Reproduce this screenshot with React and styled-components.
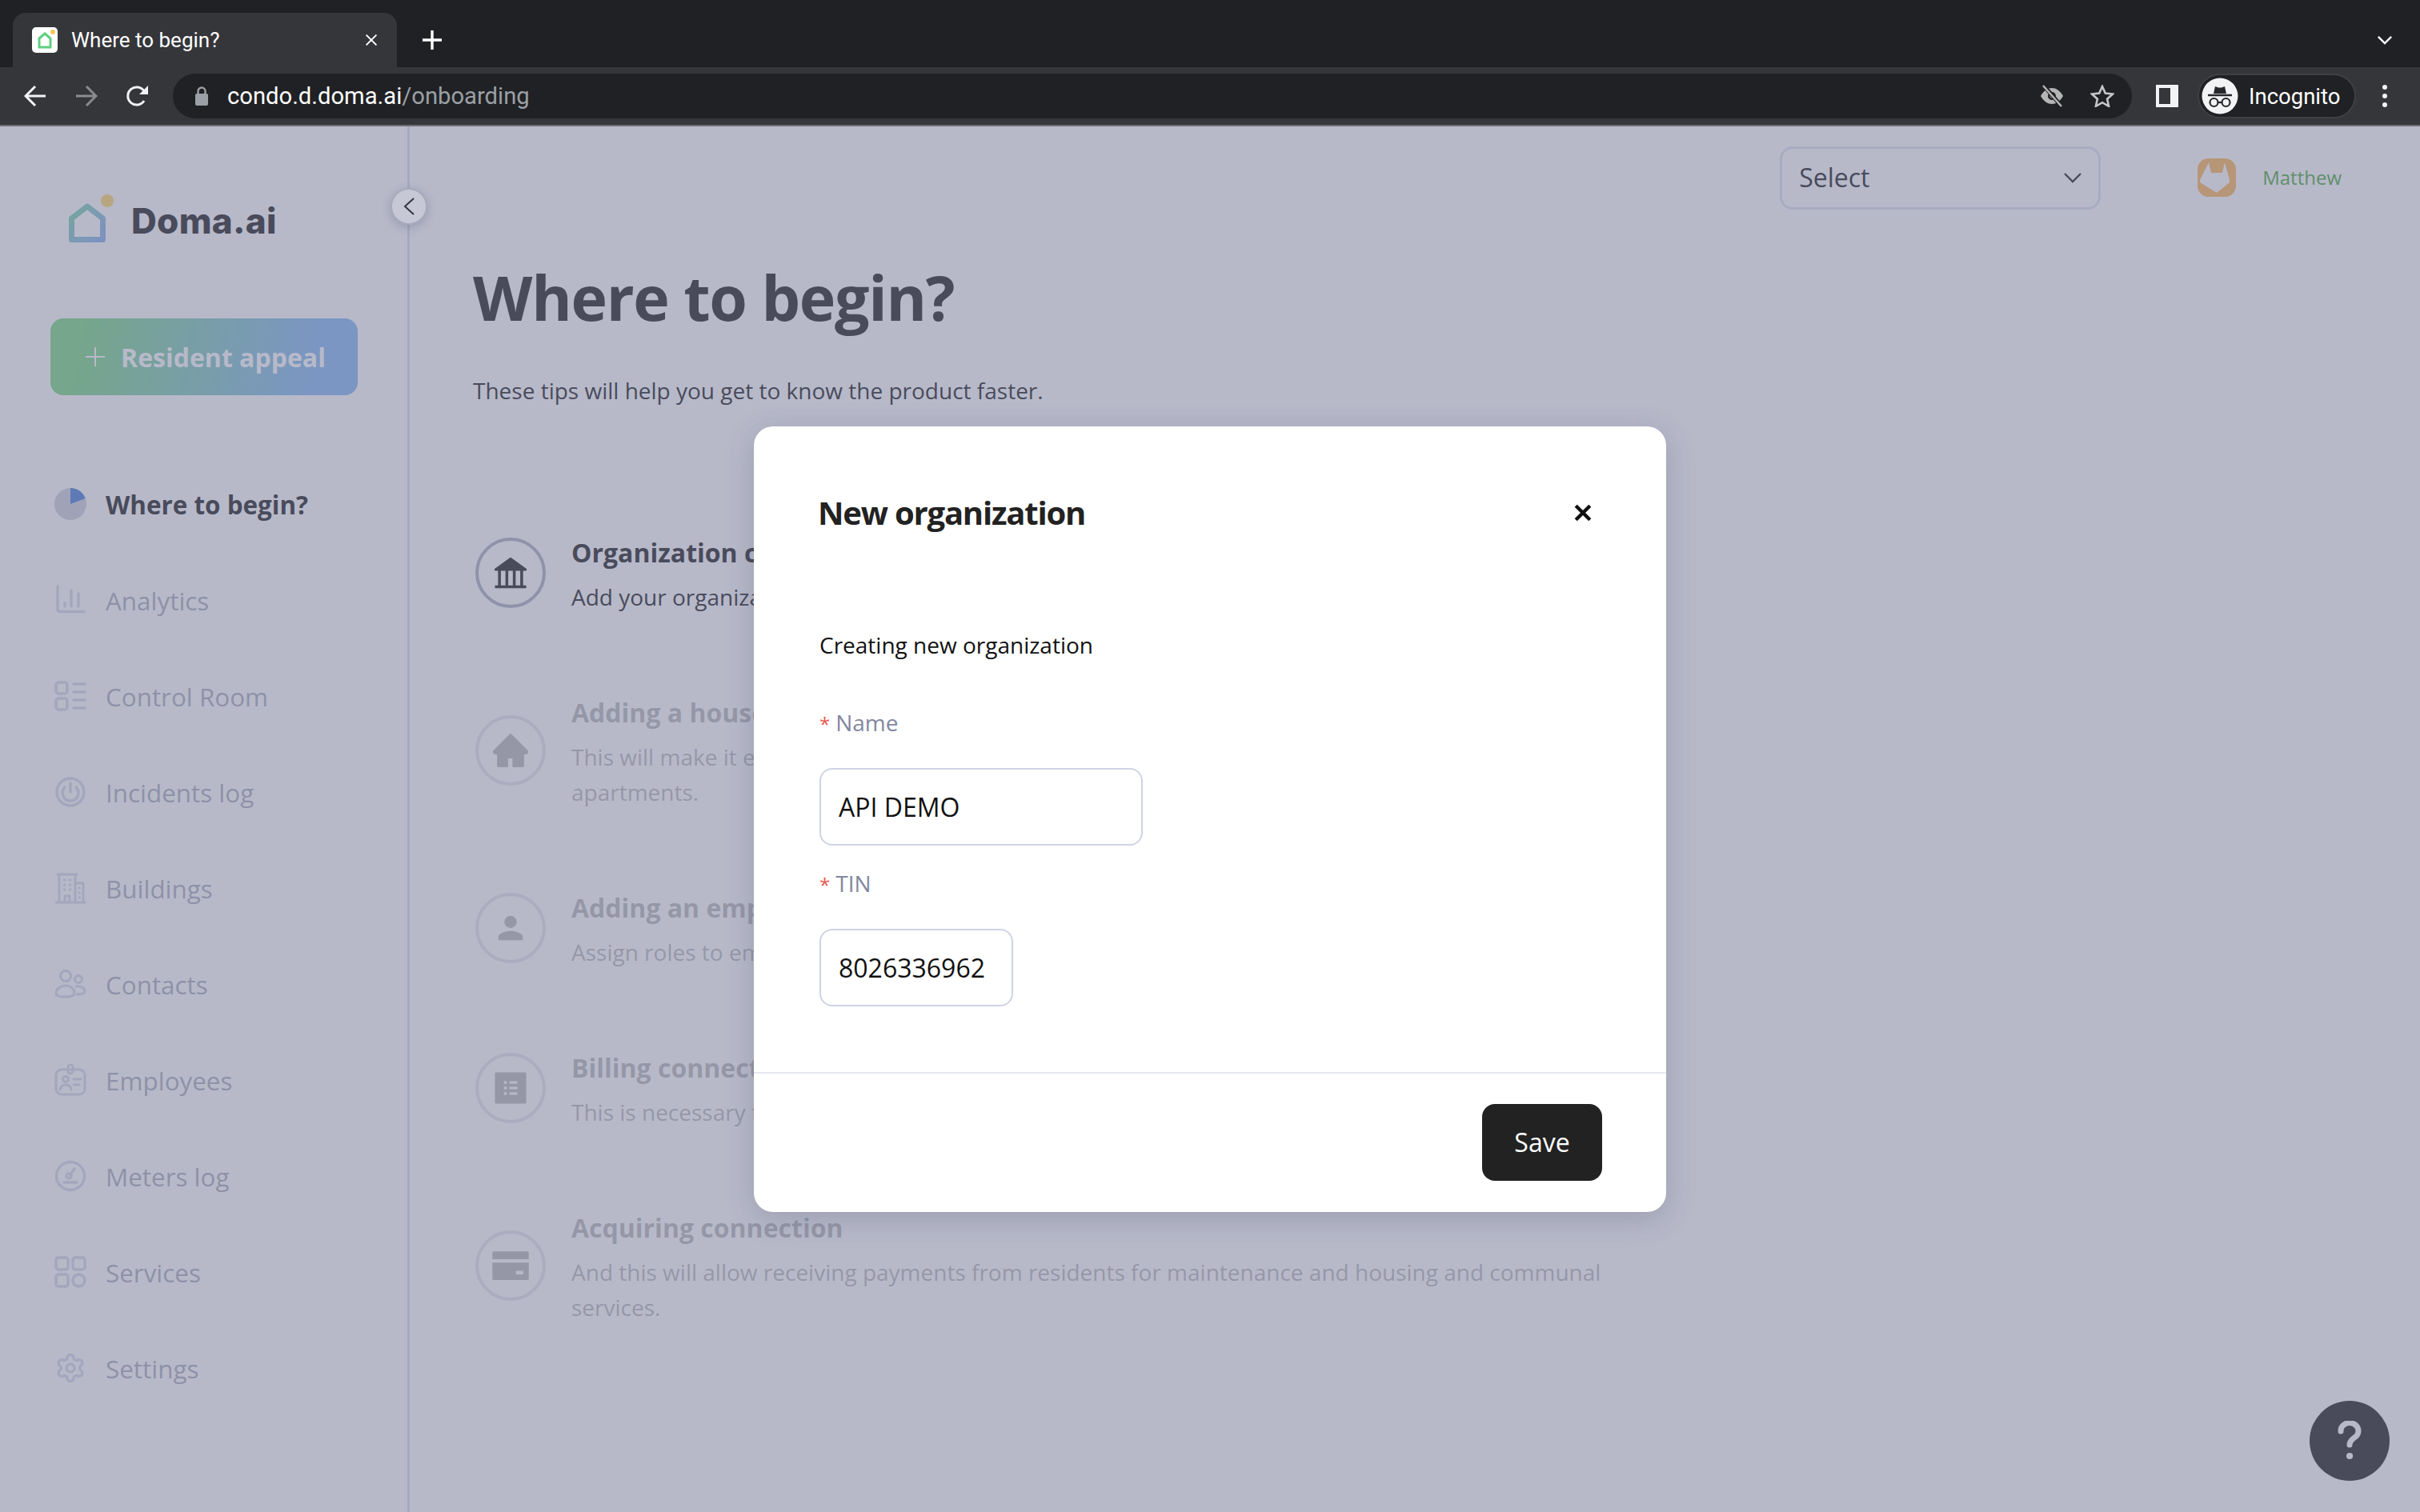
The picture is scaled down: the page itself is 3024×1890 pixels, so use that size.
import React from 'react'
import styled, { createGlobalStyle } from 'styled-components'
import { Settings } from 'lucide-react'
import { AiFillBank, AiFillHome, AiFillProfile, AiFillCreditCard } from 'react-icons/ai'
import { MdPerson } from 'react-icons/md'

const Global = createGlobalStyle`
    html, body {
        margin: 0;
        padding: 0;
        width: 3024px;
        height: 1890px;
        overflow: hidden;
        background: #fff;
        font-family: "Open Sans", sans-serif;
    }
    * { box-sizing: border-box; }
`

const Screen = styled.div`
    width: 3024px;
    height: 1890px;
    display: flex;
    flex-direction: column;
`

/* browser chrome */
const TabStrip = styled.div`
    height: 84px;
    background: #202124;
    display: flex;
    align-items: flex-end;
    padding: 0 35px 0 16px;
    flex-shrink: 0;
`
const Tab = styled.div`
    width: 480px;
    height: 68px;
    background: #35363a;
    border-radius: 16px 16px 0 0;
    display: flex;
    align-items: center;
    padding: 0 24px 0 24px;
    color: #fff;
    font: 400 26px "Roboto", sans-serif;
`
const TabTitle = styled.span`
    margin-left: 17px;
    flex: 1;
`
const NewTab = styled.div`
    width: 88px;
    height: 68px;
    display: flex;
    align-items: center;
    justify-content: center;
    color: #fff;
`
const TabMenu = styled.div`
    margin-left: auto;
    height: 68px;
    display: flex;
    align-items: center;
    color: #fff;
`
const Toolbar = styled.div`
    height: 74px;
    background: #35363a;
    border-bottom: 2px solid #6e6f73;
    display: flex;
    align-items: center;
    padding: 0 0 0 30px;
    flex-shrink: 0;
`
const NavBtn = styled.div`
    width: ${p => p.$w || 64}px;
    margin-left: ${p => p.$ml || 0}px;
    flex-shrink: 0;
    display: flex;
    align-items: center;
    color: ${p => p.$off ? '#8a8b8e' : '#f1f3f4'};
`
const Omnibox = styled.div`
    width: 2448px;
    height: 56px;
    margin-left: -6px;
    flex-shrink: 0;
    border-radius: 28px;
    background: #202124;
    display: flex;
    align-items: center;
    padding: 0 22px 0 27px;
`
const Url = styled.div`
    margin-left: 23px;
    flex: 1;
    color: #fff;
    font: 400 29.2px "Roboto", sans-serif;
    span { color: #9aa0a6; }
`
const OmniIcons = styled.div`
    display: flex;
    align-items: center;
    gap: 33px;
`
const Profile = styled.div`
    width: 198px;
    height: 56px;
    margin-left: 24px;
    flex-shrink: 0;
    border-radius: 28px;
    background: #202124;
    border: 2px solid #3f4044;
    display: flex;
    align-items: center;
    padding-left: 3px;
    gap: 13px;
    color: #fff;
    font: 400 27.5px "Roboto", sans-serif;
`

/* page */
const Page = styled.div`
    position: relative;
    flex: 1;
    display: flex;
    min-height: 0;
`
const Sidebar = styled.aside`
    position: relative;
    width: 512px;
    flex-shrink: 0;
    border-right: 3px solid #dcdee8;
    padding: 85px 0 0 63px;
`
const LogoRow = styled.div`
    display: flex;
    align-items: flex-end;
    height: 60px;
    padding-left: 23px;
`
const LogoText = styled.span`
    margin-left: 22px;
    font: 800 44px/54px "Inter", sans-serif;
    letter-spacing: .3px;
    color: #222;
`
const CreateBtn = styled.div`
    width: 384px;
    height: 96px;
    margin-top: 95px;
    border-radius: 16px;
    background: linear-gradient(100deg, #7cd882 10%, #86b8f2 85%);
    display: flex;
    align-items: center;
    padding-left: 44px;
    gap: 20px;
    color: #fff;
    font: 700 32px "Open Sans", sans-serif;
`
const Nav = styled.nav`
    margin-top: 76px;
`
const NavItem = styled.div`
    height: 120px;
    display: flex;
    align-items: center;
    gap: 24px;
    padding-left: 5px;
    font-size: 31.4px;
    font-weight: ${p => p.$active ? 700 : 400};
    color: ${p => p.$active ? '#222' : '#adafba'};
    svg { color: #d6d8e4; flex-shrink: 0; }
`
const Toggle = styled.div`
    position: absolute;
    z-index: 2;
    top: 77px;
    right: -25px;
    width: 46px;
    height: 46px;
    border-radius: 50%;
    background: #c6c8d6;
    border: 2px solid #a9abbd;
    box-shadow: 0 3px 12px rgba(60, 64, 90, .25);
    display: flex;
    align-items: center;
    justify-content: center;
    color: #33353f;
`
const Main = styled.main`
    flex: 1;
    padding-top: 25px;
`
const Header = styled.header`
    display: flex;
    justify-content: flex-end;
    align-items: center;
    padding-right: 98px;
    height: 79px;
`
const SelectBox = styled.div`
    width: 401px;
    height: 79px;
    border: 3px solid #e1e3ee;
    border-radius: 16px;
    display: flex;
    align-items: center;
    justify-content: space-between;
    padding: 0 21px 2px 21px;
    font-size: 32px;
    color: #222;
`
const SelectArrow = styled.span`
    display: flex;
    color: #222;
`
const UserBox = styled.div`
    margin-left: 121px;
    display: flex;
    align-items: center;
    gap: 33px;
    font-size: 24px;
    color: #50a83e;
    padding-bottom: 1px;
`
const UserName = styled.span`
    margin-bottom: 2px;
`
const Content = styled.div`
    padding-left: 79px;
`
const Heading = styled.h1`
    margin: 60px 0 44px;
    font-size: 77px;
    line-height: 100px;
    font-weight: 700;
    letter-spacing: -1.3px;
    color: #222;
`
const Lead = styled.p`
    margin: 0 0 154px;
    font-size: 28px;
    line-height: 44px;
    color: #222;
`
const Steps = styled.div`
    display: flex;
    flex-direction: column;
    gap: 96px;
`
const Step = styled.div`
    display: flex;
    align-items: center;
    gap: 32px;
    padding-left: 3px;
    opacity: ${p => p.$dim ? .3 : 1};
`
const StepCircle = styled.div`
    width: 88px;
    height: 88px;
    flex-shrink: 0;
    border-radius: 50%;
    border: 4px solid #aeb1c0;
    display: flex;
    align-items: center;
    justify-content: center;
    color: #222;
`
const StepText = styled.div`
    width: 1340px;
`
const StepTitle = styled.div`
    font-size: 32px;
    line-height: 54px;
    font-weight: 700;
    color: #222;
    margin-bottom: 6px;
`
const StepDesc = styled.div`
    font-size: 28px;
    line-height: 44px;
    color: #222;
`
const HelpBtn = styled.div`
    position: absolute;
    right: 38px;
    bottom: 39px;
    width: 100px;
    height: 100px;
    border-radius: 50%;
    background: #222;
    display: flex;
    align-items: center;
    justify-content: center;
    color: #fff;
`

/* modal */
const Overlay = styled.div`
    position: absolute;
    inset: 0;
    z-index: 1;
    background: rgba(111, 115, 147, .5);
    display: flex;
    justify-content: center;
    align-items: flex-start;
    padding-top: 375px;
`
const Modal = styled.div`
    width: 1140px;
    height: 982px;
    background: #fff;
    border-radius: 24px;
    box-shadow: 0 8px 36px rgba(60, 64, 90, .22);
    display: flex;
    flex-direction: column;
`
const ModalBody = styled.div`
    flex: 1;
    padding: 80px 80px 0 82px;
`
const ModalHead = styled.div`
    display: flex;
    justify-content: space-between;
    align-items: center;
    height: 56px;
    margin-left: -2px;
`
const ModalTitle = styled.h2`
    margin: 0;
    font-size: 40px;
    line-height: 56px;
    font-weight: 700;
    letter-spacing: -1.2px;
    color: #222;
`
const CloseBtn = styled.div`
    display: flex;
    margin-right: 13px;
    color: #111;
`
const ModalNote = styled.div`
    margin-top: 117px;
    font-size: 28px;
    line-height: 40px;
    color: #111;
`
const Field = styled.div`
    margin-top: ${p => p.$first ? 57 : 27}px;
`
const Label = styled.div`
    font-size: 28px;
    line-height: 40px;
    color: #82879f;
    i {
        font-style: normal;
        color: #e8574d;
        font-size: 24px;
        margin-right: 7px;
    }
`
const InputBox = styled.div`
    width: ${p => p.$w}px;
    height: 97px;
    margin-top: 35px;
    border: 2px solid #d0d3e5;
    border-radius: 16px;
    display: flex;
    align-items: center;
    padding-left: 22px;
    font-size: 32px;
    color: #111;
`
const ModalFoot = styled.div`
    height: 175px;
    border-top: 2px solid #e6e8f1;
    display: flex;
    justify-content: flex-end;
    padding: 38px 80px 0 0;
`
const SaveBtn = styled.div`
    width: 150px;
    height: 96px;
    border-radius: 16px;
    background: #222;
    color: #fff;
    display: flex;
    align-items: center;
    justify-content: center;
    padding-bottom: 2px;
    font-size: 32px;
    font-weight: 500;
`

const Stroke = ({ size = 40, w = 3.4, children }) => (
    <svg width={size} height={size} viewBox="0 0 40 40" fill="none" stroke="currentColor" strokeWidth={w} strokeLinecap="round" strokeLinejoin="round">
        {children}
    </svg>
)

const PieIcon = () => (
    <svg width="40" height="40" viewBox="0 0 40 40">
        <circle cx="20" cy="20" r="20" fill="#d0d2dc" />
        <path d="M20 20V0a20 20 0 0 1 18.6 13z" fill="#4a7ed8" />
    </svg>
)
const AnalyticsIcon = () => <Stroke><path d="M4 3v29a2.5 2.5 0 0 0 2.5 2.5H37M13 24v4M21 8v20M30 12v16" /></Stroke>
const RoomIcon = () => <Stroke><rect x="2" y="3" width="14" height="14" rx="3" /><rect x="2" y="23" width="14" height="14" rx="3" /><path d="M24 5h14M24 15h14M24 25h14M24 35h14" /></Stroke>
const IncidentIcon = () => <Stroke><circle cx="20" cy="20" r="17" /><path d="M13 14a10 10 0 1 0 14 0M20 9v11" /></Stroke>
const BuildingIcon = () => <Stroke w={2.8}><path d="M2 38h36M6 38V3h20v35M4 3h24M26 14h10v24M13 38v-8h6v8" /><path d="M12 10h1M19 10h1M12 16h1M19 16h1M12 22h1M19 22h1M31 20h.5M31 26h.5M31 32h.5" /></Stroke>
const ContactsIcon = () => <Stroke w={3}><circle cx="14" cy="10" r="6.5" /><circle cx="30" cy="14" r="4.5" /><path d="M2 32c0-6 5-10 12-10 6 0 11 4 11 9 0 3-3 5-11 5S2 35 2 32zM27 23c6-1 11 2 11 6 0 3-4 4-10 4" /></Stroke>
const BadgeIcon = () => <Stroke w={3}><rect x="2" y="7" width="36" height="31" rx="7" /><rect x="17" y="1" width="6" height="11" rx="3" /><circle cx="14" cy="19" r="3.5" /><path d="M7 32c1-4 4-6 7-6s6 2 7 6M24 19h9M24 26h7" /></Stroke>
const MeterIcon = () => <Stroke><circle cx="20" cy="20" r="17.5" /><circle cx="18" cy="20" r="3" /><path d="M20 18l5-7M12 28h16" /></Stroke>
const ServicesIcon = () => <Stroke><rect x="2" y="2" width="15" height="15" rx="3" /><rect x="23" y="2" width="15" height="15" rx="3" /><rect x="2" y="23" width="15" height="15" rx="3" /><circle cx="30.5" cy="30.5" r="7.5" /></Stroke>
const SettingsIcon = () => <Settings size={40} strokeWidth={2} />

const LogoMark = () => (
    <svg width="56" height="60" viewBox="0 0 56 60" fill="none">
        <defs>
            <linearGradient id="logoGrad" x1="0" y1="0" x2="1" y2="1">
                <stop offset="0" stopColor="#7dd6a8" />
                <stop offset="1" stopColor="#8cb0f0" />
            </linearGradient>
        </defs>
        <path d="M3.5 30L23 15l19.5 15v26.5H3.5z" stroke="url(#logoGrad)" strokeWidth="7" strokeLinejoin="round" />
        <circle cx="48" cy="8" r="8" fill="#ffd86a" />
    </svg>
)

const Favicon = () => (
    <svg width="32" height="32" viewBox="0 0 32 32">
        <rect width="32" height="32" rx="5" fill="#fff" />
        <path d="M9 14l7-6 7 6v11H9z" fill="none" stroke="#5fcf80" strokeWidth="3" />
        <circle cx="26" cy="6" r="3" fill="#f7c65b" />
    </svg>
)
const CrossIcon = ({ size, w }) => (
    <svg width={size} height={size} viewBox="0 0 20 20" fill="none" stroke="currentColor" strokeWidth={w}>
        <path d="M2 2l16 16M18 2L2 18" />
    </svg>
)
const PlusIcon = ({ size, w }) => (
    <svg width={size} height={size} viewBox="0 0 24 24" fill="none" stroke="currentColor" strokeWidth={w}>
        <path d="M12 0v24M0 12h24" />
    </svg>
)
const Chevron = ({ dir = 'down', w = 3, width = 22, height = 14 }) => (
    <svg width={width} height={height} viewBox={dir === 'down' ? '0 0 22 14' : '0 0 14 22'} fill="none" stroke="currentColor" strokeWidth={w}>
        <path d={dir === 'down' ? 'M1 2l10 10L21 2' : 'M13 1L2 11l11 10'} />
    </svg>
)
const BackArrow = ({ flip }) => (
    <svg width="28" height="28" viewBox="0 0 28 28" fill="none" stroke="currentColor" strokeWidth="3" style={flip ? { transform: 'scaleX(-1)' } : undefined}>
        <path d="M27 14H3M14 2L2 14l12 12" />
    </svg>
)
const ReloadIcon = () => (
    <svg width="28" height="28" viewBox="0 0 28 28">
        <path d="M22 20a11 11 0 1 1 0-12" fill="none" stroke="currentColor" strokeWidth="3" />
        <path d="M27 1v11H16z" fill="currentColor" />
    </svg>
)
const LockIcon = () => (
    <svg width="18" height="24" viewBox="0 0 18 24">
        <path d="M4.5 10V6a4.5 4.5 0 0 1 9 0v4" fill="none" stroke="#9aa0a6" strokeWidth="2.4" />
        <rect x="1" y="9" width="16" height="15" rx="2" fill="#9aa0a6" />
    </svg>
)
const EyeOffIcon = () => (
    <svg width="30" height="28" viewBox="0 0 30 28">
        <path d="M1 14C5 7 10 4 15 4s10 3 14 10c-4 7-9 10-14 10S5 21 1 14z" fill="#b5b5b5" />
        <circle cx="15" cy="14" r="5" fill="#202124" />
        <circle cx="15" cy="14" r="2.5" fill="#b5b5b5" />
        <path d="M4 0l24 28" stroke="#202124" strokeWidth="5" />
        <path d="M4 1l23 26" stroke="#b5b5b5" strokeWidth="2.5" />
    </svg>
)
const StarIcon = () => (
    <svg width="30" height="28" viewBox="0 0 30 28" fill="none" stroke="#c4c7c9" strokeWidth="2.6">
        <path d="M15 2l3.8 8.5 9.2 1-6.900 6.200 2 9.100L15 22.200 6.900 26.800l2-9.100L2 11.500l9.200-1z" />
    </svg>
)
const PanelIcon = () => (
    <svg width="28" height="28" viewBox="0 0 28 28">
        <rect width="28" height="28" fill="#f1f3f4" />
        <rect x="4" y="4" width="14" height="20" fill="#35363a" />
    </svg>
)
const IncognitoIcon = () => (
    <svg width="46" height="46" viewBox="0 0 46 46" style={{ flexShrink: 0 }}>
        <circle cx="23" cy="23" r="22.5" fill="#f1f3f4" />
        <path d="M15 20l2-9 4 1.5h4l4-1.5 2 9z" fill="#26272b" />
        <path d="M8 22h30" stroke="#26272b" strokeWidth="2.5" />
        <circle cx="15.5" cy="31" r="5" fill="none" stroke="#26272b" strokeWidth="2.2" />
        <circle cx="30.5" cy="31" r="5" fill="none" stroke="#26272b" strokeWidth="2.2" />
        <path d="M20.5 31h5" stroke="#26272b" strokeWidth="2.2" />
    </svg>
)
const KebabIcon = () => (
    <svg width="8" height="30" viewBox="0 0 8 30" fill="#f1f3f4">
        <circle cx="4" cy="4" r="3" />
        <circle cx="4" cy="15" r="3" />
        <circle cx="4" cy="26" r="3" />
    </svg>
)
const AvatarIcon = () => (
    <svg width="48" height="48" viewBox="0 0 48 48">
        <rect width="48" height="48" rx="14" fill="#ffb95d" />
        <path d="M14 5l3 13h14l3-13 6 22v3L24 43 3 30v-3z" fill="#fff" />
        <path d="M0 26h3l0 5 21 12 21-12v-5h3v8a14 14 0 0 1-14 14H14A14 14 0 0 1 0 34z" fill="#ffb95d" />
    </svg>
)
const HelpIcon = () => (
    <svg width="30" height="50" viewBox="0 0 30 50" fill="none" stroke="currentColor" strokeWidth="7" strokeLinecap="round">
        <path d="M4 13a11 10 0 1 1 17 8c-4 3-6 5-6 9" />
        <path d="M15 44h.1" strokeWidth="8" />
    </svg>
)

const navItems = [
    { label: 'Analytics', Icon: AnalyticsIcon },
    { label: 'Control Room', Icon: RoomIcon },
    { label: 'Incidents log', Icon: IncidentIcon },
    { label: 'Buildings', Icon: BuildingIcon },
    { label: 'Contacts', Icon: ContactsIcon },
    { label: 'Employees', Icon: BadgeIcon },
    { label: 'Meters log', Icon: MeterIcon },
    { label: 'Services', Icon: ServicesIcon },
    { label: 'Settings', Icon: SettingsIcon },
]

const steps = [
    { title: 'Organization creation', text: 'Add your organization details', icon: <AiFillBank size={50} /> },
    { title: 'Adding a house', text: 'This will make it easier to create requests from residents and link them to entrances, floors and apartments.', icon: <AiFillHome size={50} />, dim: true },
    { title: 'Adding an employee', text: 'Assign roles to employees', icon: <MdPerson size={46} />, dim: true },
    { title: 'Billing connection', text: 'This is necessary to issue bills', icon: <AiFillProfile size={50} />, dim: true },
    { title: 'Acquiring connection', text: 'And this will allow receiving payments from residents for maintenance and housing and communal services.', icon: <AiFillCreditCard size={52} />, dim: true },
]

const App = () => {
    return <Screen>
        <Global />
        <TabStrip>
            <Tab>
                <Favicon />
                <TabTitle>Where to begin?</TabTitle>
                <CrossIcon size={16} w={2.4} />
            </Tab>
            <NewTab><PlusIcon size={24} w={3.4} /></NewTab>
            <TabMenu><Chevron width={18} height={12} /></TabMenu>
        </TabStrip>
        <Toolbar>
            <NavBtn><BackArrow /></NavBtn>
            <NavBtn $off><BackArrow flip /></NavBtn>
            <NavBtn><ReloadIcon /></NavBtn>
            <Omnibox>
                <LockIcon />
                <Url>condo.d.doma.ai<span>/onboarding</span></Url>
                <OmniIcons>
                    <EyeOffIcon />
                    <StarIcon />
                </OmniIcons>
            </Omnibox>
            <NavBtn $ml={30} $w={28}><PanelIcon /></NavBtn>
            <Profile>
                <IncognitoIcon />
                Incognito
            </Profile>
            <NavBtn $ml={32} $w={8}><KebabIcon /></NavBtn>
        </Toolbar>
        <Page>
            <Sidebar>
                <LogoRow>
                    <LogoMark />
                    <LogoText>Doma.ai</LogoText>
                </LogoRow>
                <CreateBtn><PlusIcon size={24} w={2} />Resident appeal</CreateBtn>
                <Nav>
                    <NavItem $active><PieIcon />Where to begin?</NavItem>
                    {navItems.map(({ label, Icon }) => (
                        <NavItem key={label}><Icon />{label}</NavItem>
                    ))}
                </Nav>
                <Toggle><Chevron dir="left" w={2} width={14} height={22} /></Toggle>
            </Sidebar>
            <Main>
                <Header>
                    <SelectBox>Select <SelectArrow><Chevron w={2.4} /></SelectArrow></SelectBox>
                    <UserBox><AvatarIcon /><UserName>Matthew</UserName></UserBox>
                </Header>
                <Content>
                    <Heading>Where to begin?</Heading>
                    <Lead>These tips will help you get to know the product faster.</Lead>
                    <Steps>
                        {steps.map(step => (
                            <Step key={step.title} $dim={step.dim}>
                                <StepCircle>{step.icon}</StepCircle>
                                <StepText>
                                    <StepTitle>{step.title}</StepTitle>
                                    <StepDesc>{step.text}</StepDesc>
                                </StepText>
                            </Step>
                        ))}
                    </Steps>
                </Content>
            </Main>
            <HelpBtn><HelpIcon /></HelpBtn>
            <Overlay>
                <Modal>
                    <ModalBody>
                        <ModalHead>
                            <ModalTitle>New organization</ModalTitle>
                            <CloseBtn><CrossIcon size={22} w={4} /></CloseBtn>
                        </ModalHead>
                        <ModalNote>Creating new organization</ModalNote>
                        <Field $first>
                            <Label><i>*</i>Name</Label>
                            <InputBox $w={404}>API DEMO</InputBox>
                        </Field>
                        <Field>
                            <Label><i>*</i>TIN</Label>
                            <InputBox $w={242}>8026336962</InputBox>
                        </Field>
                    </ModalBody>
                    <ModalFoot>
                        <SaveBtn>Save</SaveBtn>
                    </ModalFoot>
                </Modal>
            </Overlay>
        </Page>
    </Screen>
}

export default App
